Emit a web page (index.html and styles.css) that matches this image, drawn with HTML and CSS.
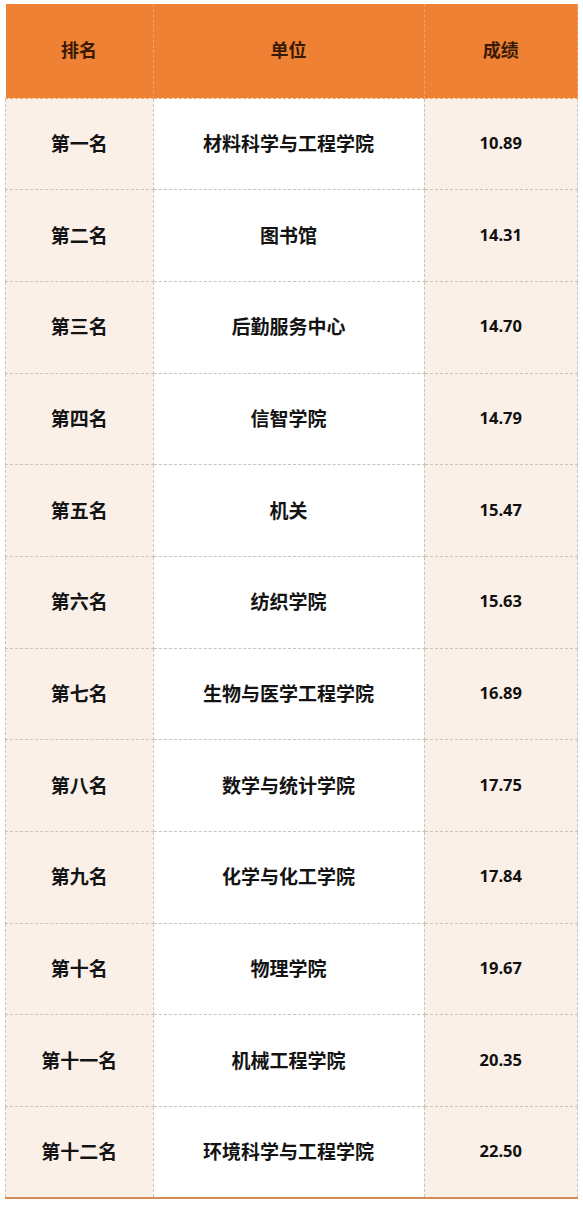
FILE: index.html
```html
<!DOCTYPE html>
<html lang="zh-CN">
<head>
    <meta charset="UTF-8">
    <meta name="viewport" content="width=device-width, initial-scale=1.0">
    <title>排名</title>
    <link rel="stylesheet" href="styles.css">
</head>
<body>
    <table class="rank-table">
        <thead>
            <tr>
                <th class="col-rank">排名</th>
                <th class="col-unit">单位</th>
                <th class="col-score">成绩</th>
            </tr>
        </thead>
        <tbody>
            <tr><td class="rank">第一名</td><td class="unit">材料科学与工程学院</td><td class="score">10.89</td></tr>
            <tr><td class="rank">第二名</td><td class="unit">图书馆</td><td class="score">14.31</td></tr>
            <tr><td class="rank">第三名</td><td class="unit">后勤服务中心</td><td class="score">14.70</td></tr>
            <tr><td class="rank">第四名</td><td class="unit">信智学院</td><td class="score">14.79</td></tr>
            <tr><td class="rank">第五名</td><td class="unit">机关</td><td class="score">15.47</td></tr>
            <tr><td class="rank">第六名</td><td class="unit">纺织学院</td><td class="score">15.63</td></tr>
            <tr><td class="rank">第七名</td><td class="unit">生物与医学工程学院</td><td class="score">16.89</td></tr>
            <tr><td class="rank">第八名</td><td class="unit">数学与统计学院</td><td class="score">17.75</td></tr>
            <tr><td class="rank">第九名</td><td class="unit">化学与化工学院</td><td class="score">17.84</td></tr>
            <tr><td class="rank">第十名</td><td class="unit">物理学院</td><td class="score">19.67</td></tr>
            <tr><td class="rank">第十一名</td><td class="unit">机械工程学院</td><td class="score">20.35</td></tr>
            <tr><td class="rank">第十二名</td><td class="unit">环境科学与工程学院</td><td class="score">22.50</td></tr>
        </tbody>
    </table>
</body>
</html>
```

FILE: styles.css
```css
body {
    margin: 0;
    padding: 4px 5px 0 5px;
    background: #fff;
    font-family: "Noto Sans CJK SC", "Noto Sans", sans-serif;
    color: #111;
}
.rank-table {
    width: 573px;
    border-collapse: collapse;
    table-layout: fixed;
}
.rank-table th,
.rank-table td {
    text-align: center;
    vertical-align: middle;
    padding: 0 0 3px 0;
    border: 1px dashed #c9c2bd;
}
.col-rank {
    width: 147px;
}
.col-unit {
    width: 270px;
}
.rank-table thead tr {
    height: 94px;
}
.rank-table th {
    background: #ee8133;
    color: #3a1a05;
    font-size: 18px;
    font-weight: bold;
    border-top: none;
    border-color: #f0a46c;
}
.rank-table th:first-child {
    border-left: none;
}
.rank-table tbody tr {
    height: 91.7px;
}
.rank-table td {
    font-size: 19px;
    font-weight: bold;
    color: #141414;
}
.rank,
.score {
    background: #fbf0e8;
}
.unit {
    background: #fff;
}
.rank-table td.score {
    font-family: "Open Sans", "Liberation Sans", sans-serif;
    font-size: 16.5px;
    font-weight: 700;
    color: #111;
}
.rank-table tbody tr:last-child td {
    border-bottom: 2px solid #d68c55;
}
```
